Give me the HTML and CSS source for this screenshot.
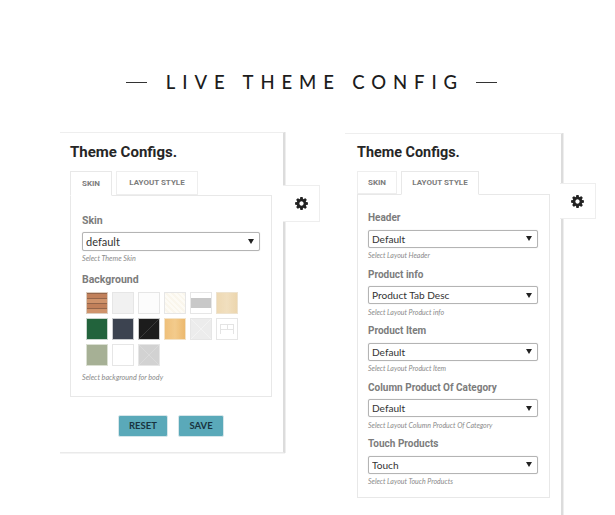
FILE: index.html
```html
<!DOCTYPE html>
<html lang="en">
<head>
<meta charset="utf-8">
<title>Live Theme Config</title>
<link rel="stylesheet" href="styles.css">
</head>
<body>
<h1 class="heading"><span class="rule"></span><span class="heading-text">LIVE THEME CONFIG</span><span class="rule"></span></h1>
<main class="panels">
  <section class="panel panel-left">
    <h2 class="title">Theme Configs.</h2>
    <div class="tabs">
      <span class="tab tab-skin-wide active">SKIN</span>
      <span class="tab tab-layout-wide">LAYOUT STYLE</span>
    </div>
    <div class="box box-left">
      <div class="label label-first">Skin</div>
      <select class="select select-large"><option>default</option></select>
      <div class="hint">Select Theme Skin</div>
      <div class="label label-bg">Background</div>
      <div class="swatches">
        <i class="sw brick"></i><i class="sw pale"></i><i class="sw white-tex"></i><i class="sw cream"></i><i class="sw band"></i><i class="sw maple"></i>
        <i class="sw green"></i><i class="sw slate"></i><i class="sw black"></i><i class="sw honey"></i><i class="sw cross"></i><i class="sw tiles"></i>
        <i class="sw sage"></i><i class="sw plain"></i><i class="sw cross-grey"></i>
      </div>
      <div class="hint hint-bg">Select background for body</div>
    </div>
    <div class="actions">
      <button class="btn btn-reset">RESET</button>
      <button class="btn btn-save">SAVE</button>
    </div>
    <div class="gear-tab gear-tab-left">
      <svg class="gear" viewBox="0 0 1792 1792"><path d="M1152 896q0-106-75-181t-181-75-181 75-75 181 75 181 181 75 181-75 75-181zm512-109v222q0 12-8 23t-20 13l-185 28q-19 54-39 91 35 50 107 138 10 12 10 25t-9 23q-27 37-99 108t-94 71q-12 0-26-9l-138-108q-44 23-91 38-16 136-29 186-7 28-36 28h-222q-14 0-24.500-8.500t-11.500-21.500l-28-184q-49-16-90-37l-141 107q-10 9-25 9-14 0-25-11-126-114-165-168-7-10-7-23 0-12 8-23 15-21 51-66.500t54-70.500q-27-50-41-99l-183-27q-13-2-21-12.500t-8-23.500v-222q0-12 8-23t19-13l186-28q14-46 39-92-40-57-107-138-10-12-10-24 0-10 9-23 26-36 98.500-107.500t94.500-71.500q13 0 26 10l138 107q44-23 91-38 16-136 29-186 7-28 36-28h222q14 0 24.500 8.500t11.500 21.500l28 184q49 16 90 37l142-107q9-9 24-9 13 0 25 10 129 119 165 170 7 8 7 22 0 12-8 23-15 21-51 66.500t-54 70.500q26 50 41 98l183 28q13 2 21 12.500t8 23.500z"/></svg>
    </div>
  </section>
  <section class="panel panel-right">
    <h2 class="title">Theme Configs.</h2>
    <div class="tabs">
      <span class="tab tab-skin-narrow">SKIN</span>
      <span class="tab tab-layout-narrow active">LAYOUT STYLE</span>
    </div>
    <div class="box box-right">
      <div class="field">
        <div class="label">Header</div>
        <select class="select"><option>Default</option></select>
        <div class="hint">Select Layout Header</div>
      </div>
      <div class="field">
        <div class="label">Product info</div>
        <select class="select"><option>Product Tab Desc</option></select>
        <div class="hint">Select Layout Product info</div>
      </div>
      <div class="field">
        <div class="label">Product Item</div>
        <select class="select"><option>Default</option></select>
        <div class="hint">Select Layout Product Item</div>
      </div>
      <div class="field">
        <div class="label">Column Product Of Category</div>
        <select class="select"><option>Default</option></select>
        <div class="hint">Select Layout Column Product Of Category</div>
      </div>
      <div class="field">
        <div class="label">Touch Products</div>
        <select class="select"><option>Touch</option></select>
        <div class="hint">Select Layout Touch Products</div>
      </div>
    </div>
    <div class="gear-tab gear-tab-right">
      <svg class="gear" viewBox="0 0 1792 1792"><path d="M1152 896q0-106-75-181t-181-75-181 75-75 181 75 181 181 75 181-75 75-181zm512-109v222q0 12-8 23t-20 13l-185 28q-19 54-39 91 35 50 107 138 10 12 10 25t-9 23q-27 37-99 108t-94 71q-12 0-26-9l-138-108q-44 23-91 38-16 136-29 186-7 28-36 28h-222q-14 0-24.500-8.500t-11.500-21.500l-28-184q-49-16-90-37l-141 107q-10 9-25 9-14 0-25-11-126-114-165-168-7-10-7-23 0-12 8-23 15-21 51-66.500t54-70.500q-27-50-41-99l-183-27q-13-2-21-12.500t-8-23.500v-222q0-12 8-23t19-13l186-28q14-46 39-92-40-57-107-138-10-12-10-24 0-10 9-23 26-36 98.500-107.500t94.500-71.500q13 0 26 10l138 107q44-23 91-38 16-136 29-186 7-28 36-28h222q14 0 24.500 8.500t11.500 21.500l28 184q49 16 90 37l142-107q9-9 24-9 13 0 25 10 129 119 165 170 7 8 7 22 0 12-8 23-15 21-51 66.500t-54 70.500q26 50 41 98l183 28q13 2 21 12.500t8 23.500z"/></svg>
    </div>
  </section>
</main>
</body>
</html>
```
FILE: styles.css
```css
* { box-sizing: border-box; }
html, body { margin: 0; padding: 0; }
body {
  width: 615px;
  height: 515px;
  overflow: hidden;
  background: #fff;
  font-family: "Roboto", "Liberation Sans", sans-serif;
}
.heading {
  display: flex;
  align-items: center;
  justify-content: center;
  gap: 19px;
  height: 24px;
  margin: 70px 0 0;
  padding-left: 8px;
  font: 500 18.5px/24px "Lato", sans-serif;
  color: #1c1c1c;
}
.heading-text { letter-spacing: 6.9px; margin-right: -6.9px; white-space: nowrap; }
.rule { width: 21px; height: 1px; background: #333; }

.panels {
  display: flex;
  align-items: flex-start;
  gap: 60px;
  margin-top: 38px;
  padding-left: 60px;
}
.panel {
  position: relative;
  background: #fff;
  border-top: 1px solid #eee;
  border-right: 2px solid #dcdcdc;
  box-shadow: 1px 0 0 #eee;
}
.panel-left {
  width: 225px;
  height: 321px;
  padding: 0 0 0 10px;
  border-bottom: 1px solid #eaeaea;
  box-shadow: 1px 0 0 #eee, 0 1px 0 #f4f4f4;
}
.panel-right {
  width: 218px;
  height: 400px;
  margin-top: 1px;
  padding: 0 0 0 12px;
}
.title {
  margin: 0;
  padding-top: 9px;
  height: 38px;
  font: 700 15px/20px "Roboto", sans-serif;
  color: #262626;
}
.panel-right .title { height: 37px; font-size: 14.4px; }
.tabs { display: flex; gap: 4px; height: 24px; position: relative; z-index: 1; }
.panel-right .tabs { height: 23px; }
.tab {
  display: flex;
  align-items: center;
  justify-content: center;
  height: 100%;
  border: 1px solid #eee;
  font: 700 8px/1 "Roboto", sans-serif;
  color: #7c7c7c;
}
.tab.active { border-color: #e8e8e8; border-bottom-color: #fff; height: calc(100% + 1px); background: #fff; }
.tab-skin-wide { width: 42px; }
.tab-layout-wide { width: 82px; }
.tab-skin-narrow { width: 40px; }
.tab-layout-narrow { width: 78px; }

.box { border: 1px solid #e8e8e8; }
.box-left { width: 202px; height: 202px; padding: 0 11px; }
.box-right { width: 193px; height: 304px; padding: 16px 10px 0; }

.label {
  font: 700 10.5px/14px "Roboto", sans-serif;
  color: #7c7c7c;
  height: 14px;
}
.box-right .label { font-size: 10px; }
.label-first { margin-top: 18px; margin-bottom: 4px; }
.label-bg { margin-top: 9px; margin-bottom: 5px; }
.select {
  display: block;
  appearance: none;
  -webkit-appearance: none;
  width: 170px;
  height: 18px;
  margin: 4.5px 0 0;
  padding: 0 0 0 3px;
  border: 1px solid #b4b4b4;
  border-radius: 2px;
  background: #fff url("data:image/svg+xml,%3Csvg xmlns='http://www.w3.org/2000/svg' width='6' height='5'%3E%3Cpath d='M0 0h6L3 5z' fill='%23222'/%3E%3C/svg%3E") no-repeat right 5px center;
  font: 400 10.1px/16px "Lato", sans-serif;
  color: #333;
  box-shadow: 0 0 1px #ccc;
}
.select-large { width: 178px; height: 19px; margin: 0; font-size: 11px; }
.hint {
  height: 10px;
  margin-top: 2.5px;
  font: italic 400 7px/10px "Lato", sans-serif;
  color: #8a8a8a;
}
.box-left .hint { margin-top: 3px; font-size: 7.2px; }
.field { height: 56.5px; }
.box-left .hint-bg { margin-top: 7px; }

.swatches {
  display: grid;
  grid-template-columns: repeat(6, 22px);
  grid-auto-rows: 22px;
  gap: 4px;
  padding-left: 4px;
}
.sw { display: block; border: 1px solid #e6e6e6; filter: blur(.35px); }
.brick {
  border-color: #dccdbf;
  background:
    repeating-linear-gradient(0deg, #cf936b 0 4px, #94654a 4px 5px, #c1805a 5px 9px, #94654a 9px 10px);
}
.pale { background: #f1f1f1; }
.white-tex { background: #fcfcfc; }
.cream { background: repeating-linear-gradient(45deg, #fdfbf5 0 2px, #faf6ec 2px 4px); }
.band { background: linear-gradient(#fff 0 5px, #c8c8c8 5px 15px, #fff 15px); }
.maple { background: linear-gradient(90deg, #eed9b3, #f1dfbf 50%, #ecd6ae); border-color: #eee3cf; }
.green { background: #22633c; border-color: #c7d5cc; }
.slate { background: #3c4350; border-color: #c8cacd; }
.black { background: linear-gradient(135deg, #1c1c1c 48%, #3a3a3a 50%, #1c1c1c 52%); border-color: #c8c8c8; }
.honey { background: linear-gradient(90deg, #efc07a, #f3cb8c 50%, #ecb96e); border-color: #f3e3c8; }
.cross { background:
    linear-gradient(45deg, transparent 48%, #f3f3f3 50%, transparent 52%),
    linear-gradient(-45deg, transparent 48%, #f3f3f3 50%, transparent 52%),
    #ececec; }
.tiles { background:
    linear-gradient(#e4e4e4, #e4e4e4) 3px 5px / 14px 1px no-repeat,
    linear-gradient(#e4e4e4, #e4e4e4) 3px 10px / 14px 1px no-repeat,
    linear-gradient(#e4e4e4, #e4e4e4) 3px 5px / 1px 10px no-repeat,
    linear-gradient(#e4e4e4, #e4e4e4) 16px 5px / 1px 10px no-repeat,
    linear-gradient(#e4e4e4, #e4e4e4) 10px 5px / 1px 5px no-repeat,
    #fff; }
.sage { background: #a6b095; border-color: #dadfd2; }
.plain { background: #fff; }
.cross-grey { background:
    linear-gradient(45deg, transparent 48%, #dadada 50%, transparent 52%),
    linear-gradient(-45deg, transparent 48%, #dadada 50%, transparent 52%),
    #d2d2d2; }

.actions {
  display: flex;
  gap: 10px;
  margin: 18px 0 0 48px;
}
.btn {
  height: 22px;
  padding: 0;
  border: 1px solid #d6e6ea;
  border-radius: 2px;
  background: #5aa9b9;
  font: 700 9.5px/20px "Lato", sans-serif;
  color: #183340;
}
.btn-reset { width: 50px; }
.btn-save { width: 46px; }

.gear-tab {
  position: absolute;
  display: flex;
  align-items: center;
  justify-content: center;
  background: #fff;
  border: 1px solid #eee;
  border-left: 0;
}
.gear-tab-left { left: 223px; top: 52px; width: 37px; height: 37px; }
.gear-tab-right { left: 215px; top: 49px; width: 36px; height: 36px; }
.gear { width: 15px; height: 15px; fill: #222; display: block; }
```
